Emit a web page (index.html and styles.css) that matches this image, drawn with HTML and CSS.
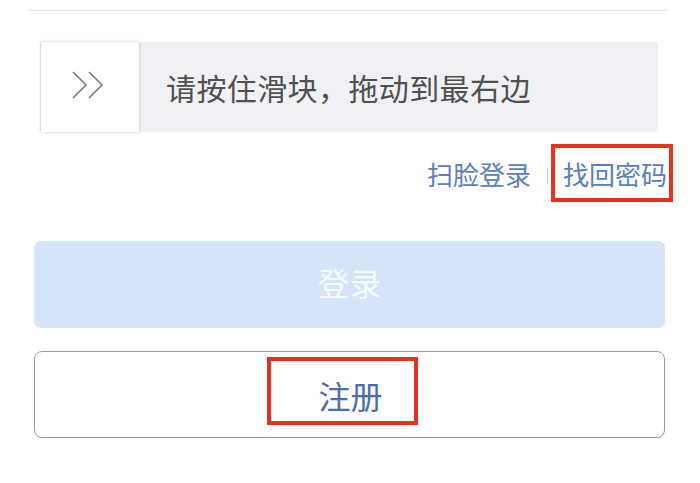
FILE: index.html
```html
<!DOCTYPE html>
<html lang="zh-CN">

<head>
  <meta charset="UTF-8">
  <meta name="viewport" content="width=device-width, initial-scale=1.0">
  <title>登录</title>
  <link rel="stylesheet" href="styles.css">
</head>

<body>

  <div class="divider"></div>

  <!-- Slide verify -->
  <div class="slider">
    <div class="knob">
      <svg width="34" height="30" viewBox="0 0 34 30" fill="none" stroke="#7a7a7a" stroke-width="1.6">
        <polyline points="2,1 15,14 2,27" />
        <polyline points="18,1 31,14 18,27" />
      </svg>
    </div>
    <span class="slider-text">请按住滑块，拖动到最右边</span>
  </div>

  <div class="links">
    <a class="link">扫脸登录</a>
    <span class="sep"></span>
    <a class="link marked marked-link">找回密码</a>
  </div>

  <button class="btn btn-login" type="button">登录</button>
  <button class="btn btn-register" type="button"><span class="marked marked-register">注册</span></button>

</body>

</html>
```

FILE: styles.css
```css
body {
  margin: 0;
  background-color: #fff;
  font-family: "Noto Sans CJK SC", "Noto Sans", sans-serif;
}

.divider {
  height: 1px;
  margin: 10px 33px 0 29px;
  background-color: #e2e2e2;
}

.slider {
  display: flex;
  align-items: center;
  height: 90px;
  margin: 31px 42px 0 40px;
  background-color: #f0f1f4;
}

.knob {
  display: flex;
  align-items: center;
  justify-content: center;
  width: 98px;
  height: 90px;
  margin-left: 1px;
  background-color: #fff;
  box-shadow: 0 0 3px rgba(0, 0, 0, 0.22);
}

.knob svg {
  margin-right: 4px;
  margin-top: -2px;
}

.slider-text {
  margin-left: 27px;
  font-size: 30px;
  line-height: 30px;
  letter-spacing: 0.4px;
  color: #505050;
}

.links {
  display: flex;
  align-items: center;
  justify-content: flex-end;
  height: 60px;
  margin: 12px 33px 0 0;
}

.link {
  font-size: 26px;
  line-height: 26px;
  color: #5b80bb;
}

.sep {
  width: 1px;
  height: 16px;
  margin: 4px 15px 0 16px;
  background-color: #c8ccd2;
}

/* red annotation boxes */
.marked {
  position: relative;
}

.marked::after {
  content: "";
  position: absolute;
  border: 4px solid #e8301c;
}

.marked-link::after {
  left: -12px;
  right: -6px;
  top: -17px;
  bottom: -15px;
}

.btn {
  display: block;
  width: 631px;
  height: 87px;
  margin-left: 34px;
  padding: 0;
  border: none;
  font-family: inherit;
  font-size: 32px;
  cursor: pointer;
}

.btn-login {
  margin-top: 37px;
  padding-bottom: 6px;
  border-radius: 7px;
  background-color: #d5e4f8;
  color: #f6f9fe;
}

.btn-register {
  margin-top: 23px;
  border: 1px solid #8c9db3;
  border-radius: 8px;
  background-color: #fff;
  color: #4a6db0;
}

.marked-register {
  display: inline-block;
  line-height: 32px;
  margin-left: 2px;
}

.marked-register::after {
  left: -51px;
  right: -35px;
  top: -22px;
  bottom: -14px;
}
```
